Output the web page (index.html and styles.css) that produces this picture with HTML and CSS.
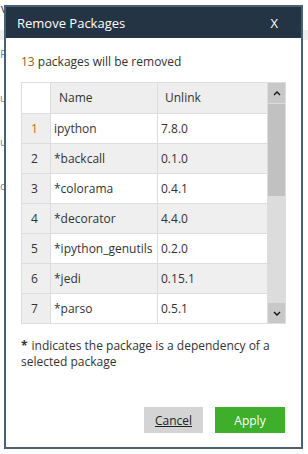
FILE: index.html
```html
<!DOCTYPE html>
<html lang="en">
<head>
  <meta charset="UTF-8">
  <meta name="viewport" content="width=device-width, initial-scale=1.0">
  <title>Remove Packages</title>
  <link rel="stylesheet" href="styles.css">
</head>
<body>
  <!-- Pagina sotto il dialogo -->
  <div class="page">
    <div class="page-top">v</div>
    <div class="page-band"></div>
    <div class="page-line link">F</div>
    <div class="page-line">u</div>
    <div class="page-line">u</div>
    <div class="page-line">o</div>
  </div>

  <div class="modal">
    <div class="modal-header">
      <span class="modal-title">Remove Packages</span>
      <span class="modal-close">X</span>
    </div>

    <div class="modal-body">
      <p class="summary"><span class="count">13</span> packages will be removed</p>

      <div class="grid-wrap">
        <table class="pkg-table">
          <thead>
            <tr>
              <th class="num"></th>
              <th class="name">Name</th>
              <th class="ver">Unlink</th>
            </tr>
          </thead>
          <tbody>
            <tr><td class="num first">1</td><td>ipython</td><td>7.8.0</td></tr>
            <tr><td class="num">2</td><td>*backcall</td><td>0.1.0</td></tr>
            <tr><td class="num">3</td><td>*colorama</td><td>0.4.1</td></tr>
            <tr><td class="num">4</td><td>*decorator</td><td>4.4.0</td></tr>
            <tr><td class="num">5</td><td>*ipython_genutils</td><td>0.2.0</td></tr>
            <tr><td class="num">6</td><td>*jedi</td><td>0.15.1</td></tr>
            <tr><td class="num">7</td><td>*parso</td><td>0.5.1</td></tr>
          </tbody>
        </table>

        <div class="scrollbar">
          <div class="sb-btn">
            <svg width="8" height="5" viewBox="0 0 8 5"><path d="M1 4 L4 1 L7 4" fill="none" stroke="#111" stroke-width="1.4"/></svg>
          </div>
          <div class="sb-thumb"></div>
          <div class="sb-track"></div>
          <div class="sb-btn">
            <svg width="8" height="5" viewBox="0 0 8 5"><path d="M1 1 L4 4 L7 1" fill="none" stroke="#111" stroke-width="1.4"/></svg>
          </div>
        </div>
      </div>

      <div class="note">
        <div><span class="star">*</span>indicates the package is a dependency of a</div>
        <div>selected package</div>
      </div>
    </div>

    <div class="modal-footer">
      <button class="btn btn-cancel">Cancel</button>
      <button class="btn btn-apply">Apply</button>
    </div>
  </div>
</body>
</html>
```

FILE: styles.css
```css
/* Base */
body {
  margin: 0;
  font-family: "Open Sans", "Noto Sans", sans-serif;
  font-size: 12px;
  color: #333333;
  background-color: #ffffff;
}

/* Pagina di sfondo */
.page {
  width: 308px;
  height: 454px;
  overflow: hidden;
}

.page-top {
  height: 30px;
  line-height: 18px;
  padding-left: 1px;
  color: #333333;
}

.page-band {
  height: 10px;
  background-color: #eeeeee;
}

.page-line {
  height: 44px;
  line-height: 28px;
  color: #888888;
  font-size: 11px;
}

.page-line.link {
  color: #3a9bbf;
}

/* Dialogo */
.modal {
  position: absolute;
  top: 5px;
  left: 4px;
  width: 299px;
  height: 444px;
  box-sizing: border-box;
  border: 2px solid #4a6174;
  background-color: #ffffff;
  display: flex;
  flex-direction: column;
}

.modal-header {
  height: 31px;
  background-color: #253445;
  color: #ffffff;
  display: flex;
  align-items: center;
  justify-content: space-between;
  padding: 0 23px 0 11px;
  font-size: 13px;
}

.modal-body {
  padding: 16px 16px 0 15px;
}

.summary {
  margin: 0 0 12px 0;
  line-height: 16px;
}

.count {
  color: #9c5a22;
}

/* Tabella pacchetti */
.grid-wrap {
  display: flex;
  width: 265px;
  border: 1px solid #dddddd;
  border-left: none;
  box-sizing: border-box;
}

.pkg-table {
  width: 247px;
  border-collapse: collapse;
  table-layout: fixed;
}

.pkg-table th,
.pkg-table td {
  box-sizing: border-box;
  height: 30px;
  padding: 0 0 0 3px;
  border: 1px solid #dddddd;
  text-align: left;
  font-weight: normal;
  white-space: nowrap;
  overflow: hidden;
}

.pkg-table tr:first-child th {
  border-top: none;
}

.pkg-table tr:last-child td {
  border-bottom: none;
}

.pkg-table th {
  background-color: #eeeeee;
}

.pkg-table th.num {
  width: 29px;
  background-color: #ffffff;
}

.pkg-table th.name {
  width: 107px;
  padding-left: 8px;
}

.pkg-table th.ver {
  padding-left: 7px;
}

.pkg-table td.num {
  background-color: #eeeeee;
  padding-left: 9px;
}

.pkg-table td.first {
  color: #c96a1c;
}

.pkg-table tbody tr:nth-child(even) td {
  background-color: #efefef;
}

/* Barra di scorrimento */
.scrollbar {
  width: 17px;
  display: flex;
  flex-direction: column;
  background-color: #dcdcdc;
}

.sb-btn {
  height: 20px;
  background-color: #c8c8c8;
  display: flex;
  align-items: center;
  justify-content: center;
}

.sb-thumb {
  height: 92px;
  margin-top: 1px;
  background-color: #c1c1c1;
}

.sb-track {
  flex: 1;
}

.note {
  margin-top: 14px;
  line-height: 16px;
}

.star {
  font-weight: bold;
  margin-right: 4px;
}

/* Pulsanti */
.modal-footer {
  margin-top: auto;
  display: flex;
  justify-content: flex-end;
  gap: 12px;
  padding: 0 16px 14px 0;
}

.btn {
  height: 26px;
  border: none;
  font-family: "Open Sans", "Noto Sans", sans-serif;
  font-size: 12px;
  cursor: pointer;
}

.btn-cancel {
  width: 59px;
  background-color: #d4d4d4;
  color: #222222;
  text-decoration: underline;
}

.btn-apply {
  width: 70px;
  background-color: #3fae2a;
  color: #ffffff;
}
```
